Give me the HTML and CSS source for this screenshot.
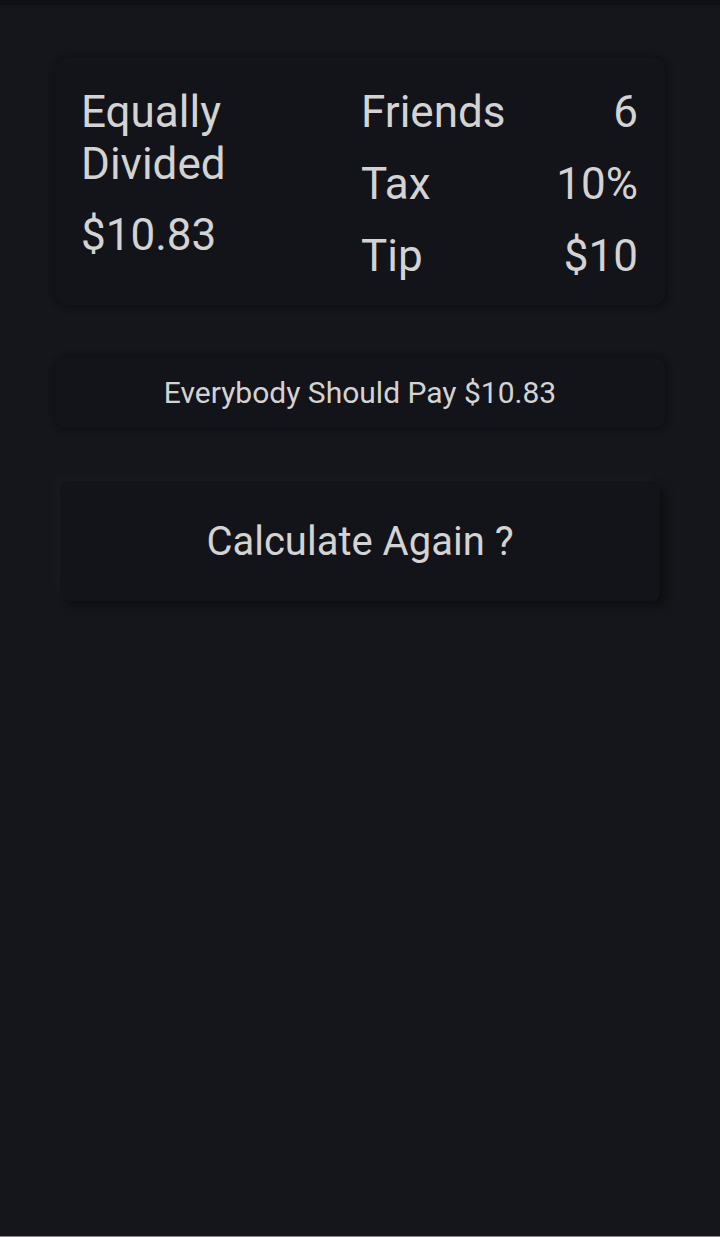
FILE: index.html
```html
<!DOCTYPE html>
<html>
<head>
<meta charset="utf-8">
<link rel="stylesheet" href="styles.css">
</head>
<body>
<div class="topbar"></div>
<main class="page">
  <section class="card summary">
    <div class="left">
      <div class="title">Equally<br>Divided</div>
      <div class="amount">$10.83</div>
    </div>
    <div class="right">
      <div class="row"><span>Friends</span><span>6</span></div>
      <div class="row"><span>Tax</span><span>10%</span></div>
      <div class="row"><span>Tip</span><span>$10</span></div>
    </div>
  </section>
  <section class="card result">Everybody Should Pay $10.83</section>
  <button class="again">Calculate Again ?</button>
</main>
</body>
</html>
```

FILE: styles.css
```css
html, body {
  margin: 0;
  padding: 0;
  background: #15161b;
  height: 100%;
}
body {
  font-family: Roboto, "Liberation Sans", sans-serif;
  color: #d3d3d3;
  display: flex;
  flex-direction: column;
  border-bottom: 1px solid #8a8a8a;
  box-sizing: border-box;
}
.topbar {
  height: 5px;
  background: #0f1014;
}
.page {
  display: flex;
  flex-direction: column;
  padding: 52px 55px 0;
}
.card {
  background: #131419;
  border-radius: 12px;
  box-shadow: 0 0 6px rgba(0,0,0,0.3), 2px 2px 8px rgba(0,0,0,0.2);
}
.summary {
  height: 248px;
  box-sizing: border-box;
  display: flex;
  padding: 29px 27px 0 26px;
  font-size: 44px;
  line-height: 52px;
}
.left {
  width: 280px;
}
.amount {
  margin-top: 19px;
}
.right {
  flex: 1;
  display: flex;
  flex-direction: column;
  gap: 20px;
}
.row {
  display: flex;
  justify-content: space-between;
}
.result {
  margin-top: 52px;
  height: 71px;
  display: flex;
  align-items: center;
  justify-content: center;
  font-size: 30px;
}
.again {
  margin: 53px 5px 0;
  height: 120px;
  border: none;
  border-radius: 8px;
  background: #131419;
  color: #d3d3d3;
  font-family: Roboto, "Liberation Sans", sans-serif;
  font-size: 40px;
  box-shadow: -5px -5px 10px rgba(255,255,255,0.025), 5px 5px 10px rgba(0,0,0,0.4);
}
```
